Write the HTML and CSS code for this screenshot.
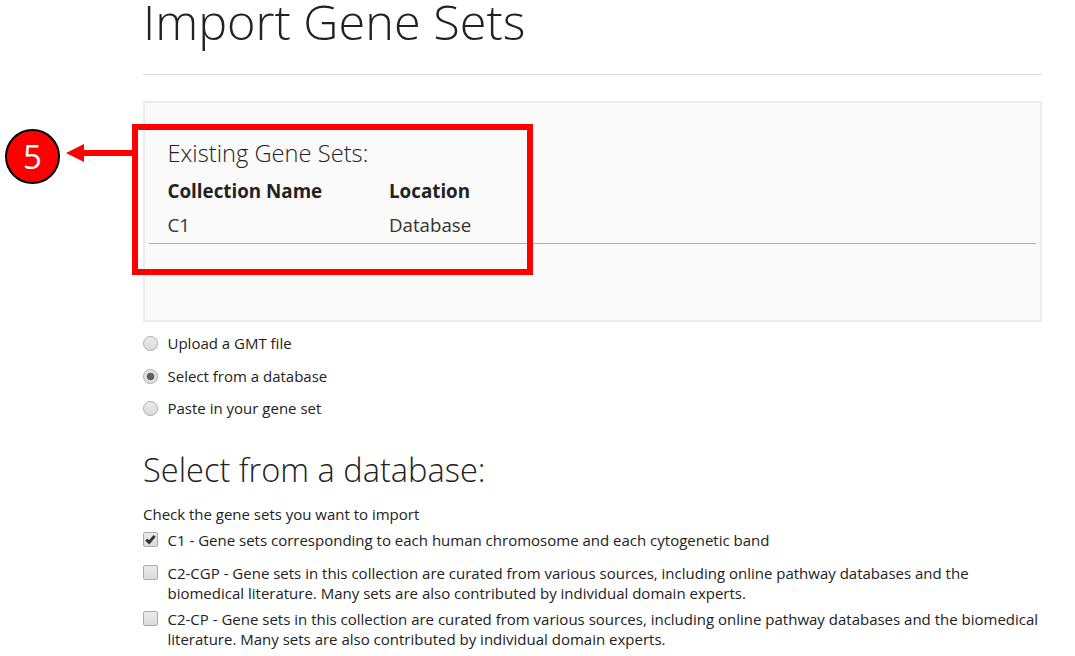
FILE: index.html
```html
<!DOCTYPE html>
<html lang="en">
<head>
<meta charset="utf-8">
<title>Import Gene Sets</title>
<link rel="stylesheet" href="styles.css">
</head>
<body>
<main class="page">
  <h1 class="title">Import Gene Sets</h1>
  <section class="panel">
    <h2 class="panel-title">Existing Gene Sets:</h2>
    <div class="row head"><span class="name">Collection Name</span><span>Location</span></div>
    <div class="row data"><span class="name">C1</span><span>Database</span></div>
    <div class="callout"></div>
    <svg class="arrow" width="68" height="20" viewBox="0 0 68 20"><path d="M0 10 18 1v6h50v6H18v6z" fill="#f00"/></svg>
    <div class="badge">5</div>
  </section>
  <form>
    <div class="sources">
      <label class="option"><input type="radio" name="source"><span>Upload a GMT file</span></label>
      <label class="option"><input type="radio" name="source" checked><span>Select from a database</span></label>
      <label class="option"><input type="radio" name="source"><span>Paste in your gene set</span></label>
    </div>
    <h2 class="subtitle">Select from a database:</h2>
    <p class="hint">Check the gene sets you want to import</p>
    <label class="option set first"><span class="box"><input type="checkbox" checked><svg class="tick" width="11" height="11" viewBox="0 0 11 11"><path d="M1.2 5.6 4.2 8.4 9.6 1.8" fill="none" stroke="#333" stroke-width="2.9"/></svg></span><span>C1 - Gene sets corresponding to each human chromosome and each cytogenetic band</span></label>
    <label class="option set"><span class="box"><input type="checkbox"></span><span>C2-CGP - Gene sets in this collection are curated from various sources, including online pathway databases and the<br>biomedical literature. Many sets are also contributed by individual domain experts.</span></label>
    <label class="option set"><span class="box"><input type="checkbox"></span><span>C2-CP - Gene sets in this collection are curated from various sources, including online pathway databases and the biomedical<br>literature. Many sets are also contributed by individual domain experts.</span></label>
  </form>
</main>
</body>
</html>
```
FILE: styles.css
```css
* { box-sizing: border-box; }
body { margin: 0; background: #fff; color: #222; font: 15px/20px "Open Sans", sans-serif; }
.page { width: 899px; margin-left: 143px; }
h1, h2, p { margin: 0; white-space: nowrap; }
h1, h2 { font-weight: 300; }
.title { height: 75px; border-bottom: 1px solid #ddd; font-size: 48.6px; line-height: 42px; }
.panel { position: relative; height: 221px; margin-top: 26px; padding: 34px 4px 0; border: 2px solid #ececec; background: #fafafa; }
.panel-title { padding-left: 18.5px; font-size: 23.7px; line-height: 32px; }
.row { display: flex; padding-left: 18.5px; white-space: nowrap; }
.head { margin-top: 5px; height: 35px; font-size: 18.8px; line-height: 34px; font-weight: 700; }
.data { height: 35px; border-bottom: 1px solid #b0b0b0; font-size: 18.7px; line-height: 32px; color: #333; }
.name { width: 221.5px; }
.callout { position: absolute; left: -13px; top: 21px; width: 401px; height: 151px; border: 6px solid #f00; }
.arrow { position: absolute; left: -79px; top: 40px; }
.badge { position: absolute; left: -140px; top: 26px; width: 55px; height: 55px; border: 2px solid #000; border-radius: 50%; background: #f00; color: #fff; font-size: 33px; line-height: 51px; text-align: center; }
.option { display: flex; gap: 9.5px; white-space: nowrap; }
.sources { display: flex; flex-direction: column; gap: 12.5px; margin-top: 11px; }
input { appearance: none; flex: none; width: 15px; height: 15px; margin: 3px 0 0; border: 1px solid #aaa; background: linear-gradient(#eaeaea, #dcdcdc); }
input[type="radio"] { border-radius: 50%; }
input[type="radio"]:checked { background: radial-gradient(circle, #606060 0 3.5px, #e4e4e4 4.2px); }
input[type="checkbox"] { display: block; margin-top: 2px; border-radius: 2px; }
.box { position: relative; flex: none; }
.tick { position: absolute; left: 2px; top: 4px; }
.subtitle { margin-top: 29px; font-size: 32.6px; line-height: 46px; }
.hint { margin-top: 11px; letter-spacing: -0.01px; }
.first { margin-top: 6px; }
.set + .set { margin-top: 6px; }
.set.first + .set { margin-top: 13px; }
```
